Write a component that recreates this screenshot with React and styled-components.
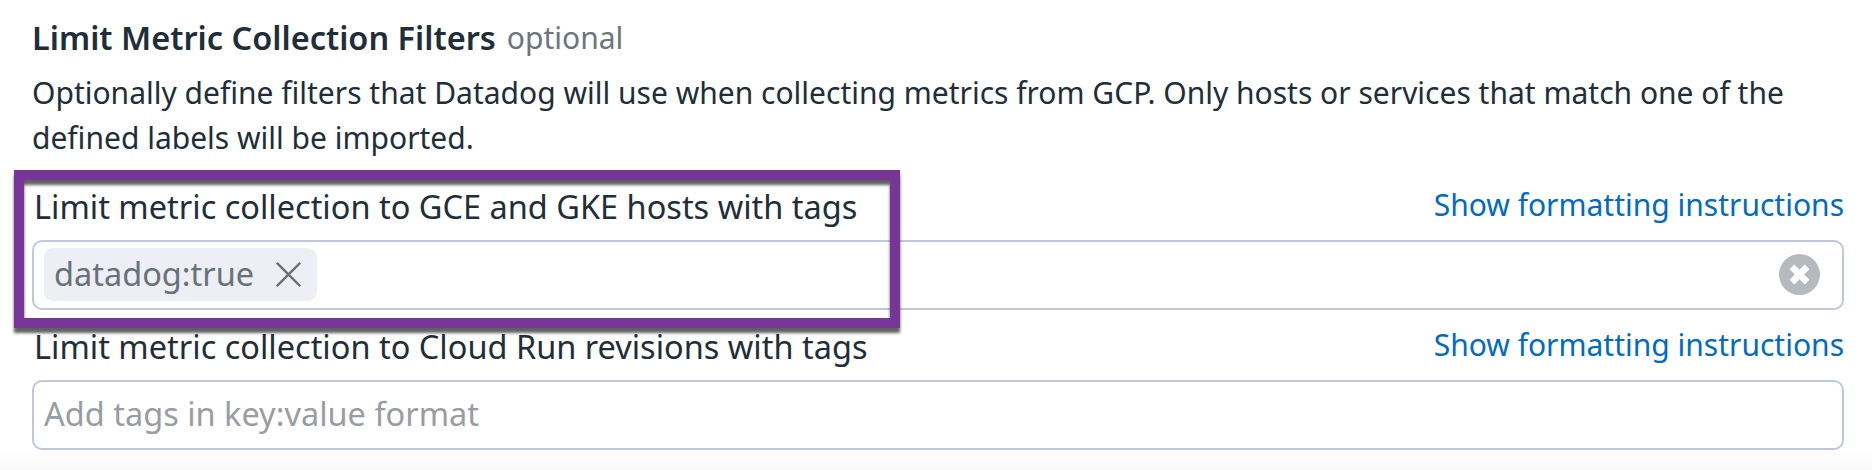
import React from "react";
import styled, { createGlobalStyle } from "styled-components";

const GlobalStyle = createGlobalStyle`
  *, *::before, *::after { box-sizing: border-box; }
  body {
    margin: 0;
    background: #fff;
    font-family: "Noto Sans", sans-serif;
    color: #212e39;
  }
`;

const Page = styled.main`
  position: relative;
  display: flex;
  flex-direction: column;
  width: 1872px;
  height: 470px;
  padding: 16px 28px 0 32px;
  overflow: hidden;
  background: linear-gradient(to bottom, #fff 448px, #f8f8f8 470px);
`;

const Header = styled.header`
  display: flex;
  align-items: flex-start;
  gap: 11px;
  height: 44px;
`;

const Title = styled.h2`
  margin: 0;
  font-size: 32.5px;
  line-height: 44px;
  font-weight: 600;
  white-space: nowrap;
`;

const Optional = styled.span`
  font-size: 30px;
  line-height: 43px;
  color: #6c757c;
`;

const Description = styled.p`
  margin: 10px 0 22px;
  font-size: 30px;
  line-height: 45px;
`;

const Fields = styled.div`
  display: flex;
  flex-direction: column;
  gap: 12px;
`;

const FieldHeader = styled.div`
  display: flex;
  justify-content: space-between;
  align-items: flex-start;
  height: 58px;
`;

const Label = styled.label`
  padding: 3px 0 0 2px;
  font-size: 32.5px;
  line-height: 44px;
  white-space: nowrap;
`;

const Link = styled.a`
  font-size: 30px;
  line-height: 46px;
  color: #006bc2;
  white-space: nowrap;
`;

const TagInput = styled.div`
  display: flex;
  align-items: center;
  justify-content: space-between;
  height: 70px;
  padding: 0 22px 1px 10px;
  border: 2px solid #bfc6e0;
  border-radius: 10px;
  background: #fff;
`;

const Tag = styled.span`
  display: flex;
  align-items: center;
  justify-content: space-between;
  width: 273px;
  height: 53px;
  padding: 0 16px 0 10px;
  border-radius: 9px;
  background: #eeeff5;
  color: #67727a;
`;

const InputText = styled.span`
  padding-bottom: 2px;
  font-size: 32.5px;
  line-height: 43px;
  color: ${({ $placeholder }) => ($placeholder ? "#979da2" : "inherit")};
`;

const Glyph = styled.svg`
  display: block;
  flex: none;
`;

const Highlight = styled.div`
  position: absolute;
  left: 14px;
  top: 170px;
  width: 886px;
  height: 158px;
  border: 10px solid #783598;
  filter: drop-shadow(0 5px 1.6px rgba(0, 0, 0, 0.62));
  pointer-events: none;
`;

const RemoveIcon = () => (
  <Glyph width="25" height="25" viewBox="0 0 25 25" fill="none" stroke="#67727a" strokeWidth="2.4">
    <path d="M0.8 0.8 24.2 24.2M24.2 0.8 0.8 24.2" />
  </Glyph>
);

const ClearIcon = () => (
  <Glyph width="41" height="41" viewBox="0 0 41 41">
    <circle cx="20.5" cy="20.5" r="20.5" fill="#b6babd" />
    <path d="M12.9 12.9 28.1 28.1M28.1 12.9 12.9 28.1" stroke="#fff" strokeWidth="6.6" />
  </Glyph>
);

const Field = ({ label, children }) => (
  <section>
    <FieldHeader>
      <Label>{label}</Label>
      <Link>Show formatting instructions</Link>
    </FieldHeader>
    <TagInput>{children}</TagInput>
  </section>
);

export default function App() {
  return (
    <>
      <GlobalStyle />
      <Page>
        <Header>
          <Title>Limit Metric Collection Filters</Title>
          <Optional>optional</Optional>
        </Header>
        <Description>
          Optionally define filters that Datadog will use when collecting metrics from GCP. Only
          hosts or services that match one of the defined labels will be imported.
        </Description>
        <Fields>
          <Field label="Limit metric collection to GCE and GKE hosts with tags">
            <Tag>
              <InputText>datadog:true</InputText>
              <RemoveIcon />
            </Tag>
            <ClearIcon />
          </Field>
          <Field label="Limit metric collection to Cloud Run revisions with tags">
            <InputText $placeholder>Add tags in key:value format</InputText>
          </Field>
        </Fields>
        <Highlight />
      </Page>
    </>
  );
}
